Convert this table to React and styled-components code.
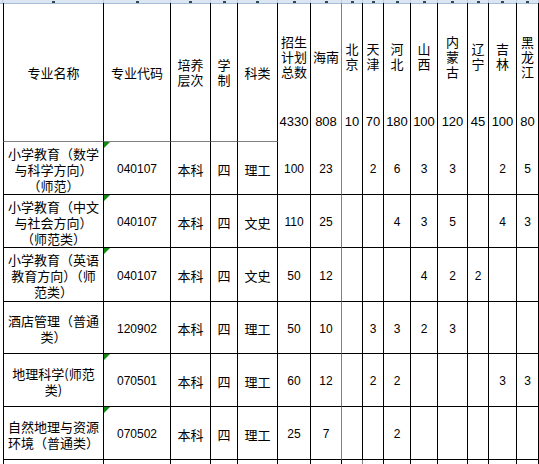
import React from "react";
import styled, { createGlobalStyle } from "styled-components";

const COLS = "101px 67px 40px 27px 40px 33px 31px 21px 21px 27px 27px 30px 21px 28px 22px 40px";

const fixedHeads = ["专业名称", "专业代码", "培养\n层次", "学\n制", "科类"];
const regionHeads = ["招生\n计划\n总数", "海南", "北\n京", "天\n津", "河\n北", "山\n西", "内\n蒙\n古", "辽\n宁", "吉\n林", "黑\n龙\n江"];
const totals = ["4330", "808", "10", "70", "180", "100", "120", "45", "100", "80"];

const rows = [
  { name: "小学教育（数学\n与科学方向）\n（师范）", code: "040107", flag: true, kind: "理工", nums: ["100", "23", "", "2", "6", "3", "3", "", "2", "5"] },
  { name: "小学教育（中文\n与社会方向）\n（师范类）", code: "040107", flag: true, kind: "文史", nums: ["110", "25", "", "", "4", "3", "5", "", "4", "3"] },
  { name: "小学教育（英语\n教育方向）（师\n范类）", code: "040107", flag: true, kind: "文史", nums: ["50", "12", "", "", "", "4", "2", "2", "", ""] },
  { name: "酒店管理（普通\n类）", code: "120902", flag: false, kind: "理工", nums: ["50", "10", "", "3", "3", "2", "3", "", "", ""] },
  { name: "地理科学(师范\n类)", code: "070501", flag: true, kind: "理工", nums: ["60", "12", "", "2", "2", "", "", "", "3", "3"] },
  { name: "自然地理与资源\n环境（普通类）", code: "070502", flag: true, kind: "理工", nums: ["25", "7", "", "", "2", "", "", "", "", ""] },
];

const Global = createGlobalStyle`
  html, body {
    margin: 0;
    padding: 0;
    background: #fff;
  }
  body {
    font-family: "Noto Sans CJK SC", "Liberation Sans", sans-serif;
    color: #000;
  }
`;

const Page = styled.div`
  width: 539px;
  height: 464px;
  overflow: hidden;
  background: #fff;
`;

const Band = styled.div`
  display: grid;
  grid-template-columns: 3px ${COLS};
  height: 4px;
  background: #dce6f2;
  border-bottom: 1px solid #a7bcd6;
  box-sizing: border-box;
`;

const BandCell = styled.div`
  border-right: 1px solid #b9cbe0;
  display: flex;
  justify-content: center;
  align-items: flex-end;
`;

const Tick = styled.span`
  width: 3px;
  height: 2px;
  background: #2c4a4e;
`;

const Sheet = styled.div`
  display: grid;
  grid-template-columns: ${COLS};
  grid-template-rows: 106px 33px 53px 53px 54px 52px 53px 53px 20px;
  margin-left: 3px;
  margin-top: -1px;
`;

const Box = styled.div`
  box-sizing: border-box;
  position: relative;
  display: flex;
  align-items: center;
  justify-content: center;
  text-align: center;
  white-space: pre-line;
  border-right: 1px solid ${(p) => p.$right || "#000"};
  border-bottom: ${(p) => (p.$bottom ? `1px solid ${p.$bottom}` : "none")};
  border-left: ${(p) => (p.$first ? "1px solid #000" : "none")};
  grid-row: ${(p) => (p.$span ? `span ${p.$span}` : "auto")};
  overflow: hidden;
`;

const HeadCell = styled(Box)`
  font-size: 13px;
  line-height: 15px;
`;

const TotalCell = styled(Box)`
  font-family: "Liberation Sans", "Noto Sans CJK SC", sans-serif;
  font-size: 13px;
  padding-bottom: 9px;
`;

const NameCell = styled(Box)`
  font-size: 13px;
  line-height: 16px;
  padding-top: 3px;
`;

const TextCell = styled(Box)`
  font-size: 13px;
  padding-top: 2px;
`;

const NumCell = styled(Box)`
  font-family: "Liberation Sans", "Noto Sans CJK SC", sans-serif;
  font-size: 12px;
  padding-top: 2px;

  &::before {
    content: "";
    display: ${(p) => (p.$flag ? "block" : "none")};
    position: absolute;
    top: 0;
    left: 0;
    width: 0;
    height: 0;
    border-top: 6px solid #118a11;
    border-right: 6px solid transparent;
  }
`;

// the line between 海南 and 北京 is the grey default gridline
const borderFor = (i) => (i === 1 ? "#808080" : "#000");

const App = () => {
  return (
    <Page>
      <Global />
      <Band>
        <BandCell />
        {COLS.split(" ").map((c, i) => (
          <BandCell key={i}>
            <Tick />
          </BandCell>
        ))}
      </Band>
      <Sheet>
        {fixedHeads.map((h, i) => (
          <HeadCell key={h} $span={2} $first={i === 0} $bottom="#808080">
            {h}
          </HeadCell>
        ))}
        {regionHeads.map((h, i) => (
          <HeadCell key={h} $right={borderFor(i)}>
            {h}
          </HeadCell>
        ))}
        <HeadCell $span={2} $bottom="#808080" />
        {totals.map((t, i) => (
          <TotalCell key={i} $right={borderFor(i)}>
            {t}
          </TotalCell>
        ))}

        {rows.map((r, ri) => (
          <React.Fragment key={ri}>
            <NameCell $first $bottom="#000">{r.name}</NameCell>
            <NumCell $bottom="#000" $flag={r.flag}>{r.code}</NumCell>
            <TextCell $bottom="#000">本科</TextCell>
            <TextCell $bottom="#000">四</TextCell>
            <TextCell $bottom="#000">{r.kind}</TextCell>
            {r.nums.map((n, i) => (
              <NumCell key={i} $bottom="#000" $right={borderFor(i)}>
                {n}
              </NumCell>
            ))}
            <NumCell $bottom="#000" />
          </React.Fragment>
        ))}

        <NameCell $first />
        {Array.from({ length: 15 }).map((_, i) => (
          <NumCell key={i} $right={borderFor(i - 5)} />
        ))}
      </Sheet>
    </Page>
  );
};

export default App;
